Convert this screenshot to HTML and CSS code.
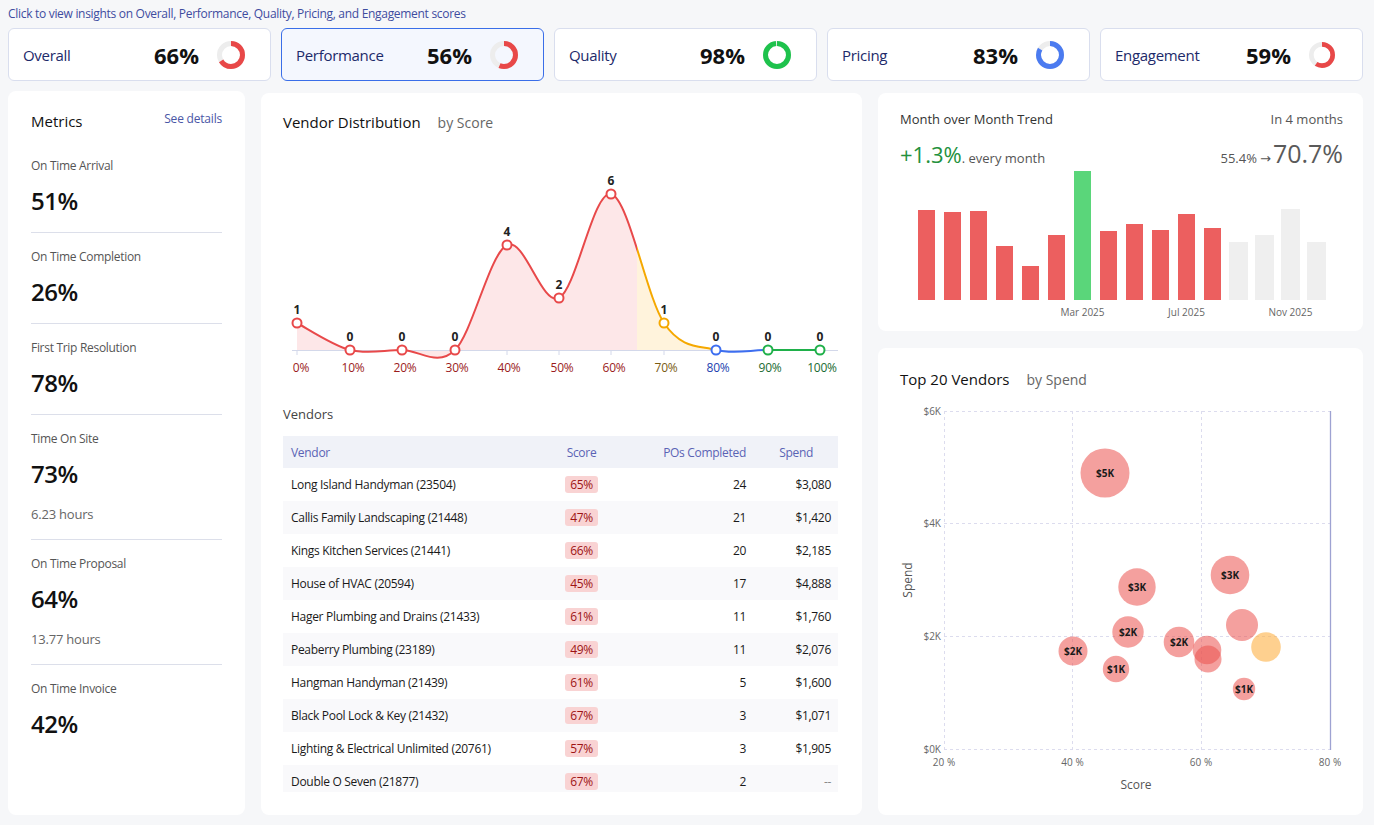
FILE: index.html
```html
<!DOCTYPE html>
<html>
<head>
<meta charset="utf-8">
<link rel="stylesheet" href="styles.css">
</head>
<body>
<div class="page">
  <div class="hint">Click to view insights on Overall, Performance, Quality, Pricing, and Engagement scores</div>
  <div class="kpis">
    <div class="kpi"><span class="kpi-label">Overall</span><span class="kpi-value">66%</span>
      <svg class="donut" viewBox="0 0 28 28"><circle cx="14" cy="14" r="11.5" class="track"/><circle cx="14" cy="14" r="11.5" class="prog red" stroke-dasharray="47.7 72.3" transform="rotate(-90 14 14)"/></svg></div>
    <div class="kpi active"><span class="kpi-label">Performance</span><span class="kpi-value">56%</span>
      <svg class="donut" viewBox="0 0 28 28"><circle cx="14" cy="14" r="11.5" class="track"/><circle cx="14" cy="14" r="11.5" class="prog red" stroke-dasharray="40.5 72.3" transform="rotate(-90 14 14)"/></svg></div>
    <div class="kpi"><span class="kpi-label">Quality</span><span class="kpi-value">98%</span>
      <svg class="donut" viewBox="0 0 28 28"><circle cx="14" cy="14" r="11.5" class="track"/><circle cx="14" cy="14" r="11.5" class="prog green" stroke-dasharray="70.8 72.3" transform="rotate(-90 14 14)"/></svg></div>
    <div class="kpi"><span class="kpi-label">Pricing</span><span class="kpi-value">83%</span>
      <svg class="donut" viewBox="0 0 28 28"><circle cx="14" cy="14" r="11.5" class="track"/><circle cx="14" cy="14" r="11.5" class="prog blue" stroke-dasharray="60 72.3" transform="rotate(-90 14 14)"/></svg></div>
    <div class="kpi"><span class="kpi-label">Engagement</span><span class="kpi-value">59%</span>
      <svg class="donut small" viewBox="0 0 28 28"><circle cx="14" cy="14" r="11.5" class="track"/><circle cx="14" cy="14" r="11.5" class="prog red" stroke-dasharray="42.6 72.3" transform="rotate(-90 14 14)"/></svg></div>
  </div>

  <div class="main">
    <section class="card metrics">
      <div class="metrics-head"><span class="card-title">Metrics</span><span class="link">See details</span></div>
      <div class="metric"><div class="metric-label">On Time Arrival</div><div class="metric-value">51%</div></div>
      <div class="metric"><div class="metric-label">On Time Completion</div><div class="metric-value">26%</div></div>
      <div class="metric"><div class="metric-label">First Trip Resolution</div><div class="metric-value">78%</div></div>
      <div class="metric has-sub"><div class="metric-label">Time On Site</div><div class="metric-value">73%</div><div class="metric-sub">6.23 hours</div></div>
      <div class="metric has-sub"><div class="metric-label">On Time Proposal</div><div class="metric-value">64%</div><div class="metric-sub">13.77 hours</div></div>
      <div class="metric"><div class="metric-label">On Time Invoice</div><div class="metric-value">42%</div></div>
    </section>

    <section class="card dist">
      <div class="title-row"><span class="card-title big">Vendor Distribution</span><span class="sub-title">by Score</span></div>
      <svg class="dist-chart" viewBox="283 133 555 252" width="555" height="252">
        <defs>
          <linearGradient id="gStroke" gradientUnits="userSpaceOnUse" x1="297" y1="0" x2="820" y2="0">
            <stop offset="0.65" stop-color="#e8494a"/><stop offset="0.65" stop-color="#f5a800"/>
            <stop offset="0.8" stop-color="#f5a800"/><stop offset="0.8" stop-color="#3d6ef0"/>
            <stop offset="0.9" stop-color="#3d6ef0"/><stop offset="0.9" stop-color="#1fb04a"/>
          </linearGradient>
          <linearGradient id="gFill" gradientUnits="userSpaceOnUse" x1="297" y1="0" x2="820" y2="0">
            <stop offset="0.65" stop-color="#fde7e8"/><stop offset="0.65" stop-color="#fff3dc"/>
            <stop offset="0.8" stop-color="#fff3dc"/><stop offset="0.8" stop-color="#e3eafd"/>
            <stop offset="0.9" stop-color="#e3eafd"/><stop offset="0.9" stop-color="#e2f5e7"/>
          </linearGradient>
        </defs>
        <path d="M297,323 C305.8,327.5 332.5,345.5 350,350 C367.5,354.5 384.5,350 402,350 C419.5,350 437.5,367.5 455,350 C472.5,332.5 489.7,253.7 507,245 C524.3,236.3 541.7,306.5 559,298 C576.3,289.5 593.5,189.8 611,194 C628.5,198.2 646.5,297 664,323 C681.5,349 698.7,345.5 716,350 C733.3,354.5 750.7,350 768,350 C785.3,350 811.3,350 820,350 L820,350 L297,350 Z" fill="url(#gFill)"/>
        <line x1="292" y1="350.5" x2="838" y2="350.5" stroke="#d3d8ea"/>
        <g stroke="#d3d8ea">
          <line x1="297" y1="351" x2="297" y2="355"/><line x1="350" y1="351" x2="350" y2="355"/><line x1="402" y1="351" x2="402" y2="355"/><line x1="455" y1="351" x2="455" y2="355"/><line x1="507" y1="351" x2="507" y2="355"/><line x1="559" y1="351" x2="559" y2="355"/><line x1="611" y1="351" x2="611" y2="355"/><line x1="664" y1="351" x2="664" y2="355"/><line x1="716" y1="351" x2="716" y2="355"/><line x1="768" y1="351" x2="768" y2="355"/><line x1="820" y1="351" x2="820" y2="355"/>
        </g>
        <path d="M297,323 C305.8,327.5 332.5,345.5 350,350 C367.5,354.5 384.5,350 402,350 C419.5,350 437.5,367.5 455,350 C472.5,332.5 489.7,253.7 507,245 C524.3,236.3 541.7,306.5 559,298 C576.3,289.5 593.5,189.8 611,194 C628.5,198.2 646.5,297 664,323 C681.5,349 698.7,345.5 716,350 C733.3,354.5 750.7,350 768,350 C785.3,350 811.3,350 820,350" fill="none" stroke="url(#gStroke)" stroke-width="2"/>
        <g class="pts" fill="#fff" stroke-width="2">
          <circle cx="297" cy="323" r="4.5" stroke="#e8494a"/>
          <circle cx="350" cy="350" r="4.5" stroke="#e8494a"/>
          <circle cx="402" cy="350" r="4.5" stroke="#e8494a"/>
          <circle cx="455" cy="350" r="4.5" stroke="#e8494a"/>
          <circle cx="507" cy="245" r="4.5" stroke="#e8494a"/>
          <circle cx="559" cy="298" r="4.5" stroke="#e8494a"/>
          <circle cx="611" cy="194" r="4.5" stroke="#e8494a"/>
          <circle cx="664" cy="323" r="4.5" stroke="#f5a800"/>
          <circle cx="716" cy="350" r="4.5" stroke="#3d6ef0"/>
          <circle cx="768" cy="350" r="4.5" stroke="#1fb04a"/>
          <circle cx="820" cy="350" r="4.5" stroke="#1fb04a"/>
        </g>
        <g class="vals" text-anchor="middle">
          <text x="297" y="314">1</text><text x="350" y="341">0</text><text x="402" y="341">0</text><text x="455" y="341">0</text><text x="507" y="236">4</text><text x="559" y="289">2</text><text x="611" y="185">6</text><text x="664" y="314">1</text><text x="716" y="341">0</text><text x="768" y="341">0</text><text x="820" y="341">0</text>
        </g>
        <g class="xl" text-anchor="middle">
          <text x="301" y="372" fill="#9b1c1c">0%</text><text x="353" y="372" fill="#9b1c1c">10%</text><text x="405" y="372" fill="#9b1c1c">20%</text><text x="457" y="372" fill="#9b1c1c">30%</text><text x="509" y="372" fill="#9b1c1c">40%</text><text x="562" y="372" fill="#9b1c1c">50%</text><text x="614" y="372" fill="#9b1c1c">60%</text><text x="666" y="372" fill="#7a5b12">70%</text><text x="718" y="372" fill="#1d3fb0">80%</text><text x="770" y="372" fill="#1a6b32">90%</text><text x="822" y="372" fill="#1a6b32">100%</text>
        </g>
      </svg>
      <div class="section-label">Vendors</div>
      <div class="table-wrap">
        <table>
          <colgroup><col class="c1"><col class="c2"><col class="c3"><col class="c4"></colgroup>
          <thead><tr><th>Vendor</th><th class="center">Score</th><th class="right">POs Completed</th><th class="right spend-h">Spend</th></tr></thead>
          <tbody>
            <tr><td>Long Island Handyman (23504)</td><td class="center"><span class="badge">65%</span></td><td class="right">24</td><td class="right">$3,080</td></tr>
            <tr><td>Callis Family Landscaping (21448)</td><td class="center"><span class="badge">47%</span></td><td class="right">21</td><td class="right">$1,420</td></tr>
            <tr><td>Kings Kitchen Services (21441)</td><td class="center"><span class="badge">66%</span></td><td class="right">20</td><td class="right">$2,185</td></tr>
            <tr><td>House of HVAC (20594)</td><td class="center"><span class="badge">45%</span></td><td class="right">17</td><td class="right">$4,888</td></tr>
            <tr><td>Hager Plumbing and Drains (21433)</td><td class="center"><span class="badge">61%</span></td><td class="right">11</td><td class="right">$1,760</td></tr>
            <tr><td>Peaberry Plumbing (23189)</td><td class="center"><span class="badge">49%</span></td><td class="right">11</td><td class="right">$2,076</td></tr>
            <tr><td>Hangman Handyman (21439)</td><td class="center"><span class="badge">61%</span></td><td class="right">5</td><td class="right">$1,600</td></tr>
            <tr><td>Black Pool Lock &amp; Key (21432)</td><td class="center"><span class="badge">67%</span></td><td class="right">3</td><td class="right">$1,071</td></tr>
            <tr><td>Lighting &amp; Electrical Unlimited (20761)</td><td class="center"><span class="badge">57%</span></td><td class="right">3</td><td class="right">$1,905</td></tr>
            <tr><td>Double O Seven (21877)</td><td class="center"><span class="badge">67%</span></td><td class="right">2</td><td class="right muted">--</td></tr>
          </tbody>
        </table>
      </div>
    </section>

    <div class="right-col">
      <section class="card trend">
        <div class="trend-head"><span class="trend-title">Month over Month Trend</span><span class="trend-side">In 4 months</span></div>
        <div class="trend-row">
          <div><span class="rate">+1.3%</span><span class="rate-sub">. every month</span></div>
          <div><span class="from">55.4%</span><span class="arrow">→</span><span class="to">70.7%</span></div>
        </div>
        <svg class="bars" viewBox="900 168 443 154" width="443" height="154">
          <g fill="#ec5f5f">
            <rect x="918" y="210" width="17" height="90"/>
            <rect x="944" y="212" width="17" height="88"/>
            <rect x="970" y="211" width="17" height="89"/>
            <rect x="996" y="246" width="17" height="54"/>
            <rect x="1022" y="266" width="17" height="34"/>
            <rect x="1048" y="235" width="17" height="65"/>
            <rect x="1100" y="231" width="17" height="69"/>
            <rect x="1126" y="224" width="17" height="76"/>
            <rect x="1152" y="230" width="17" height="70"/>
            <rect x="1178" y="214" width="17" height="86"/>
            <rect x="1204" y="228" width="17" height="72"/>
          </g>
          <rect x="1074" y="171" width="17" height="129" fill="#5ad67a"/>
          <g fill="#efefef">
            <rect x="1229" y="242" width="19" height="58"/>
            <rect x="1255" y="235" width="19" height="65"/>
            <rect x="1281" y="209" width="19" height="91"/>
            <rect x="1307" y="242" width="19" height="58"/>
          </g>
          <g class="axis-l" text-anchor="middle">
            <text x="1082.5" y="315.5">Mar 2025</text><text x="1186.5" y="315.5">Jul 2025</text><text x="1290.5" y="315.5">Nov 2025</text>
          </g>
        </svg>
      </section>

      <section class="card scatter">
        <div class="title-row"><span class="card-title big">Top 20 Vendors</span><span class="sub-title">by Spend</span></div>
        <svg class="scatter-chart" viewBox="900 390 443 410" width="443" height="410">
          <g stroke="#dcdcee" stroke-dasharray="3 3" fill="none">
            <line x1="944" y1="411.5" x2="1330" y2="411.5"/>
            <line x1="944" y1="523.5" x2="1330" y2="523.5"/>
            <line x1="944" y1="636.5" x2="1330" y2="636.5"/>
            <line x1="944" y1="749.5" x2="1330" y2="749.5"/>
            <line x1="944.5" y1="411" x2="944.5" y2="750"/>
            <line x1="1072.5" y1="411" x2="1072.5" y2="750"/>
            <line x1="1201.5" y1="411" x2="1201.5" y2="750"/>
          </g>
          <line x1="1330.5" y1="411" x2="1330.5" y2="750" stroke="#9ea2d2" stroke-width="1.3"/>
          <g class="tick" text-anchor="end">
            <text x="941" y="415">$6K</text><text x="941" y="527">$4K</text><text x="941" y="640">$2K</text><text x="941" y="753">$0K</text>
          </g>
          <g class="tick" text-anchor="middle">
            <text x="944" y="765.5">20 %</text><text x="1072.5" y="765.5">40 %</text><text x="1201" y="765.5">60 %</text><text x="1330" y="765.5">80 %</text>
          </g>
          <text class="axis-title" x="1136" y="789" text-anchor="middle">Score</text>
          <text class="axis-title" transform="translate(912 580) rotate(-90)" text-anchor="middle">Spend</text>
          <g fill="rgba(235,82,79,0.55)">
            <circle cx="1105" cy="473" r="24.5"/>
            <circle cx="1137" cy="587" r="18.7"/>
            <circle cx="1230" cy="575" r="19.3"/>
            <circle cx="1128" cy="632" r="15.7"/>
            <circle cx="1073" cy="651" r="14.5"/>
            <circle cx="1116" cy="669" r="13.2"/>
            <circle cx="1179" cy="642" r="15.3"/>
            <circle cx="1207" cy="650" r="14.3"/>
            <circle cx="1208" cy="659" r="13.5"/>
            <circle cx="1242" cy="625" r="16"/>
            <circle cx="1244" cy="689" r="11.2"/>
          </g>
          <circle cx="1266" cy="647" r="14.8" fill="rgba(253,177,68,0.6)"/>
          <g class="bub" text-anchor="middle">
            <text x="1105" y="476.5">$5K</text>
            <text x="1137" y="590.5">$3K</text>
            <text x="1230" y="578.5">$3K</text>
            <text x="1128" y="635.5">$2K</text>
            <text x="1073" y="654.5">$2K</text>
            <text x="1116" y="672.5">$1K</text>
            <text x="1179" y="645.5">$2K</text>
            <text x="1244" y="692.5">$1K</text>
          </g>
        </svg>
      </section>
    </div>
  </div>
</div>
</body>
</html>
```

FILE: styles.css
```css
* { box-sizing: border-box; }
body {
  margin: 0;
  background: #f6f7f9;
  font-family: "Open Sans", "Noto Sans", sans-serif;
  color: #222;
}
.page {
  width: 1374px;
  height: 825px;
  padding: 6px 11px 0 8px;
  overflow: hidden;
}
.hint {
  font-size: 12px;
  line-height: 16px;
  color: #3e4c9f;
  letter-spacing: -0.3px;
}
.kpis {
  display: grid;
  grid-template-columns: repeat(5, 263px);
  gap: 10px;
  margin-top: 6px;
}
.kpi {
  height: 53px;
  background: #fff;
  border: 1px solid #d9deee;
  border-radius: 6px;
  display: flex;
  align-items: center;
  padding: 0 25px 0 14px;
}
.kpi.active {
  border-color: #3a6ee8;
  background: #f4f7fe;
}
.kpi-label {
  font-size: 15px;
  color: #1d2a6a;
  letter-spacing: -0.3px;
}
.kpi-value {
  margin-left: auto;
  margin-right: 18px;
  font-size: 22px;
  font-weight: 700;
  color: #111;
}
.donut { width: 28px; height: 28px; display: block; }
.donut.small { width: 26px; height: 26px; margin-right: 2px; }
.donut .track { fill: none; stroke: #ededed; stroke-width: 5; }
.donut .prog { fill: none; stroke-width: 5; }
.donut .red { stroke: #e84848; }
.donut .green { stroke: #1ec24c; }
.donut .blue { stroke: #4b7bf0; }

.main {
  display: grid;
  grid-template-columns: 237px 601px 485px;
  column-gap: 16px;
  height: 724px;
  margin-top: 10px;
}
.card {
  background: #fff;
  border-radius: 8px;
}
.card-title {
  font-size: 15px;
  line-height: 20px;
  color: #111;
}
.card-title.big { line-height: 22px; }
.sub-title {
  font-size: 14px;
  color: #666;
}
.title-row {
  display: flex;
  align-items: baseline;
  gap: 17px;
}

/* metrics */
.metrics { padding: 20px 23px 0; }
.metrics-head {
  display: flex;
  justify-content: space-between;
  align-items: flex-start;
  margin-bottom: 11px;
}
.link {
  font-size: 12px;
  line-height: 16px;
  color: #4a56a6;
  letter-spacing: -0.2px;
}
.metric {
  padding: 16px 0 15px;
  border-bottom: 1px solid #dcdfea;
}
.metric.has-sub { padding-bottom: 16px; }
.metric:last-child { border-bottom: none; }
.metric-label {
  font-size: 12px;
  line-height: 16px;
  color: #555;
  letter-spacing: -0.3px;
}
.metric-value {
  font-size: 24px;
  line-height: 32px;
  margin-top: 11px;
  font-weight: 600;
  color: #111;
  letter-spacing: -0.5px;
}
.metric-sub {
  font-size: 13px;
  line-height: 18px;
  color: #666;
  margin-top: 15px;
  letter-spacing: -0.2px;
}

/* distribution */
.dist {
  margin-top: 2px;
  padding: 18px 24px 23px 22px;
  display: flex;
  flex-direction: column;
}
.dist-chart { display: block; }
.dist-chart .vals text { font-size: 12px; font-weight: 700; fill: #222; }
.dist-chart .xl text { font-size: 12px; letter-spacing: -0.2px; }
.section-label {
  margin-top: 20px;
  font-size: 13px;
  line-height: 18px;
  color: #444;
}
.table-wrap {
  margin-top: 13px;
  height: 356px;
  overflow: hidden;
}
table {
  width: 100%;
  border-collapse: collapse;
  table-layout: fixed;
  font-size: 12px;
  letter-spacing: -0.3px;
}
col.c1 { width: 257px; }
col.c2 { width: 83px; }
col.c3 { width: 131px; }
col.c4 { width: 84px; }
th {
  height: 32px;
  background: #f0f2f8;
  font-weight: 400;
  color: #5a63b5;
  text-align: left;
  padding: 0 8px;
}
td {
  height: 33px;
  padding: 0 8px;
  color: #1a1a1a;
  white-space: nowrap;
}
td:last-child { padding-right: 7px; }
th.spend-h { padding-right: 25px; }
tbody tr:nth-child(even) td { background: #f9f9fb; }
.center { text-align: center; }
.right { text-align: right; }
.muted { color: #888; }
.badge {
  display: inline-block;
  background: #f9d3d3;
  color: #9e1414;
  padding: 0 5px;
  line-height: 17px;
  border-radius: 3px;
}

/* right column */
.right-col {
  margin-top: 2px;
  display: flex;
  flex-direction: column;
  gap: 17px;
}
.trend {
  height: 238px;
  padding: 16px 20px 0 22px;
}
.trend-head {
  display: flex;
  justify-content: space-between;
  font-size: 13px;
  line-height: 20px;
  color: #333;
}
.trend-side { color: #555; }
.trend-row {
  display: flex;
  justify-content: space-between;
  align-items: baseline;
  margin-top: 9px;
  height: 30px;
  line-height: 30px;
}
.rate { font-size: 22px; color: #23913d; }
.rate-sub { font-size: 13px; color: #555; }
.from { font-size: 13px; color: #555; }
.arrow {
  font-family: "DejaVu Sans", sans-serif;
  font-size: 13px;
  color: #555;
  margin: 0 2px 0 3px;
}
.to { font-size: 25px; color: #5a5a5a; }
.bars { display: block; }
.bars .axis-l text { font-size: 10px; fill: #666; }

.scatter {
  flex: 1;
  padding: 20px 20px 15px 22px;
}
.scatter-chart { display: block; }
.scatter-chart .tick text { font-size: 10px; fill: #666; }
.scatter-chart .axis-title { font-size: 12px; fill: #555; }
.scatter-chart .bub text { font-size: 10px; font-weight: 700; fill: #1a1a1a; }
```
